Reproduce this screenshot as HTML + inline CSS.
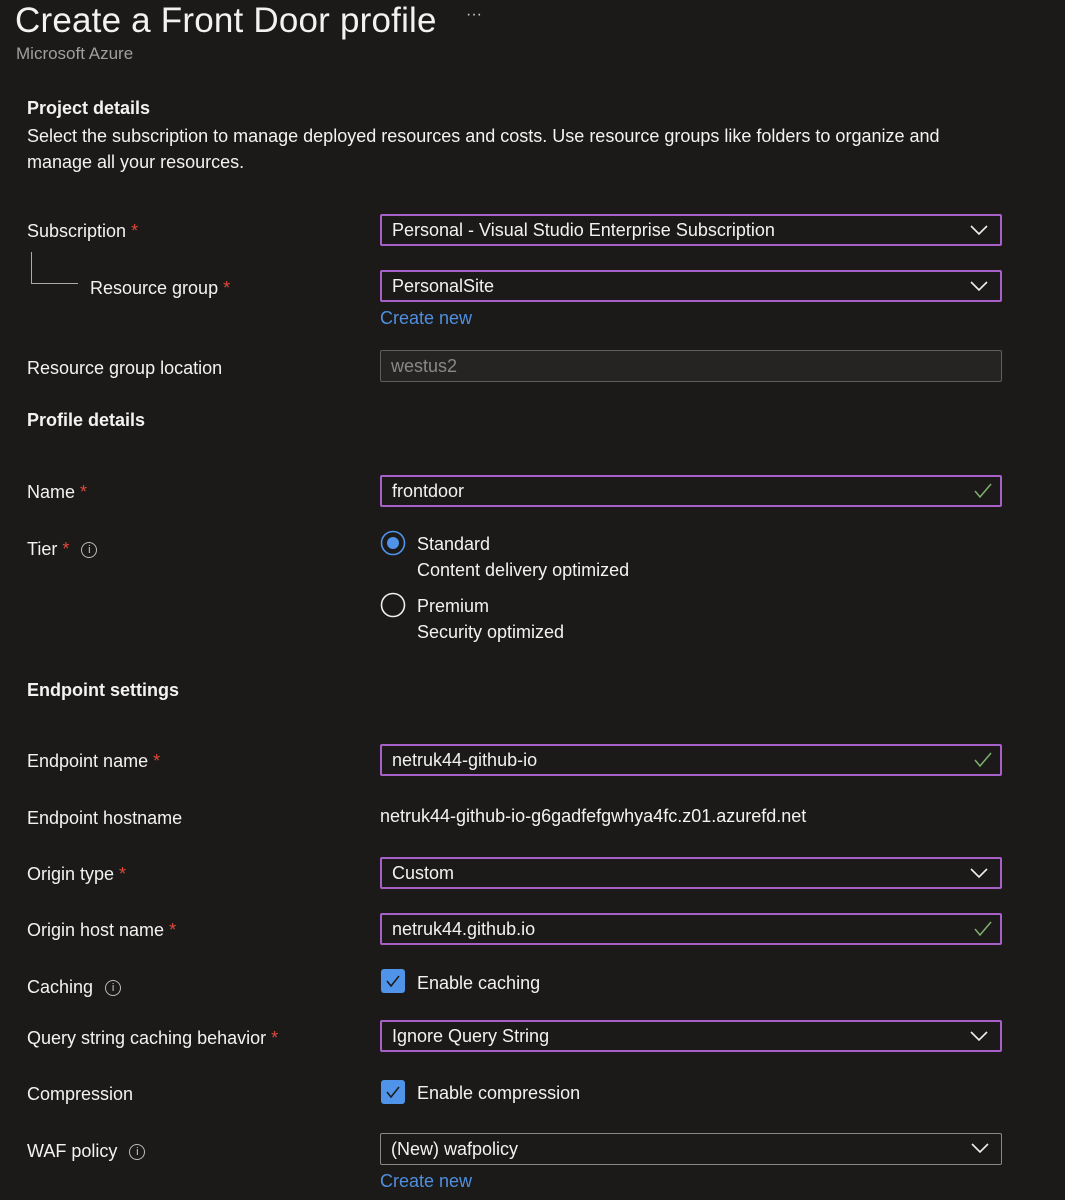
<!DOCTYPE html>
<html><head><meta charset="utf-8"><style>
body{margin:0;width:1065px;height:1200px;background:#1b1a19;color:#f3f2f1;font-family:"Liberation Sans",sans-serif;font-size:18px;position:relative;overflow:hidden}
.a{position:absolute;white-space:nowrap}
.l{left:27px}
.r{color:#e0483a}
.box{position:absolute;left:380px;width:608px;height:28px;border:2px solid #a660c8;border-radius:2px;line-height:29px;padding-left:10px}
.dis{border:1px solid #605e5c;background:#252423;color:#8a8886;height:30px;line-height:31px;width:610px}
.gry{border:1px solid #8a8886;height:30px;line-height:31px;width:610px}
.chev{position:absolute;right:12px;top:9px}
.chk{position:absolute;right:8px;top:6px}
.lnk{color:#4f8fdf}
.info{display:inline-block;width:14px;height:14px;border:1px solid #bbb;border-radius:50%;font-size:11px;line-height:14px;text-align:center;vertical-align:middle;margin-left:12px;color:#ccc}
.cb{position:absolute;left:381px;width:24px;height:24px;background:#4f94e8;border-radius:3px}
</style></head><body>
<div class="a" style="left:15px;top:0;font-size:35px;line-height:42px;color:#f3f2f1;letter-spacing:0.2px">Create a Front Door profile</div>
<div class="a" style="left:466px;top:6px;font-size:16px;color:#ccc">···</div>
<div class="a" style="left:16px;top:44px;font-size:17px;color:#a19f9d">Microsoft Azure</div>
<div class="a l" style="top:98px;font-weight:bold">Project details</div>
<div class="a l" style="top:123px;line-height:26px;white-space:normal;width:960px">Select the subscription to manage deployed resources and costs. Use resource groups like folders to organize and manage all your resources.</div>

<div class="a l" style="top:221px">Subscription <span class="r">*</span></div>
<div style="position:absolute;left:31px;top:252px;width:46px;height:31px;border-left:1px solid #aaa;border-bottom:1px solid #aaa"></div>
<div class="a" style="left:90px;top:278px">Resource group <span class="r">*</span></div>
<div class="box" style="top:214px">Personal - Visual Studio Enterprise Subscription<svg class="chev" width="18" height="11"><path d="M1 1l8 8 8-8" stroke="#eee" stroke-width="1.6" fill="none"/></svg></div>
<div class="box" style="top:270px">PersonalSite<svg class="chev" width="18" height="11"><path d="M1 1l8 8 8-8" stroke="#eee" stroke-width="1.6" fill="none"/></svg></div>
<div class="a lnk" style="left:380px;top:308px">Create new</div>

<div class="a l" style="top:358px">Resource group location</div>
<div class="box dis" style="top:350px">westus2</div>

<div class="a l" style="top:410px;font-weight:bold">Profile details</div>
<div class="a l" style="top:482px">Name <span class="r">*</span></div>
<div class="box" style="top:475px">frontdoor<svg class="chk" width="18" height="16"><path d="M1 8l5 6 11-13" stroke="#7fb070" stroke-width="1.5" fill="none"/></svg></div>
<div class="a l" style="top:539px">Tier <span class="r">*</span><span class="info">i</span></div>
<svg style="position:absolute;left:380px;top:530px" width="28" height="28"><circle cx="13" cy="13" r="11.5" stroke="#4f94e8" stroke-width="1.6" fill="none"/><circle cx="13" cy="13" r="6" fill="#4f94e8"/></svg>
<div class="a" style="left:417px;top:534px">Standard</div>
<div class="a" style="left:417px;top:560px">Content delivery optimized</div>
<svg style="position:absolute;left:380px;top:592px" width="28" height="28"><circle cx="13" cy="13" r="11.5" stroke="#eee" stroke-width="1.6" fill="none"/></svg>
<div class="a" style="left:417px;top:596px">Premium</div>
<div class="a" style="left:417px;top:622px">Security optimized</div>

<div class="a l" style="top:680px;font-weight:bold">Endpoint settings</div>
<div class="a l" style="top:751px">Endpoint name <span class="r">*</span></div>
<div class="box" style="top:744px">netruk44-github-io<svg class="chk" width="18" height="16"><path d="M1 8l5 6 11-13" stroke="#7fb070" stroke-width="1.5" fill="none"/></svg></div>
<div class="a l" style="top:808px">Endpoint hostname</div>
<div class="a" style="left:380px;top:806px">netruk44-github-io-g6gadfefgwhya4fc.z01.azurefd.net</div>
<div class="a l" style="top:864px">Origin type <span class="r">*</span></div>
<div class="box" style="top:857px">Custom<svg class="chev" width="18" height="11"><path d="M1 1l8 8 8-8" stroke="#eee" stroke-width="1.6" fill="none"/></svg></div>
<div class="a l" style="top:920px">Origin host name <span class="r">*</span></div>
<div class="box" style="top:913px">netruk44.github.io<svg class="chk" width="18" height="16"><path d="M1 8l5 6 11-13" stroke="#7fb070" stroke-width="1.5" fill="none"/></svg></div>
<div class="a l" style="top:977px">Caching<span class="info">i</span></div>
<div class="cb" style="top:969px"><svg width="24" height="24"><path d="M6 12l4 5 8-10" stroke="#1b1a19" stroke-width="1.5" fill="none"/></svg></div>
<div class="a" style="left:417px;top:973px">Enable caching</div>
<div class="a l" style="top:1028px">Query string caching behavior <span class="r">*</span></div>
<div class="box" style="top:1020px">Ignore Query String<svg class="chev" width="18" height="11"><path d="M1 1l8 8 8-8" stroke="#eee" stroke-width="1.6" fill="none"/></svg></div>
<div class="a l" style="top:1084px">Compression</div>
<div class="cb" style="top:1080px"><svg width="24" height="24"><path d="M6 12l4 5 8-10" stroke="#1b1a19" stroke-width="1.5" fill="none"/></svg></div>
<div class="a" style="left:417px;top:1083px">Enable compression</div>
<div class="a l" style="top:1141px">WAF policy<span class="info">i</span></div>
<div class="box gry" style="top:1133px">(New) wafpolicy<svg class="chev" width="18" height="11"><path d="M1 1l8 8 8-8" stroke="#eee" stroke-width="1.6" fill="none"/></svg></div>
<div class="a lnk" style="left:380px;top:1171px">Create new</div>
</body></html>
